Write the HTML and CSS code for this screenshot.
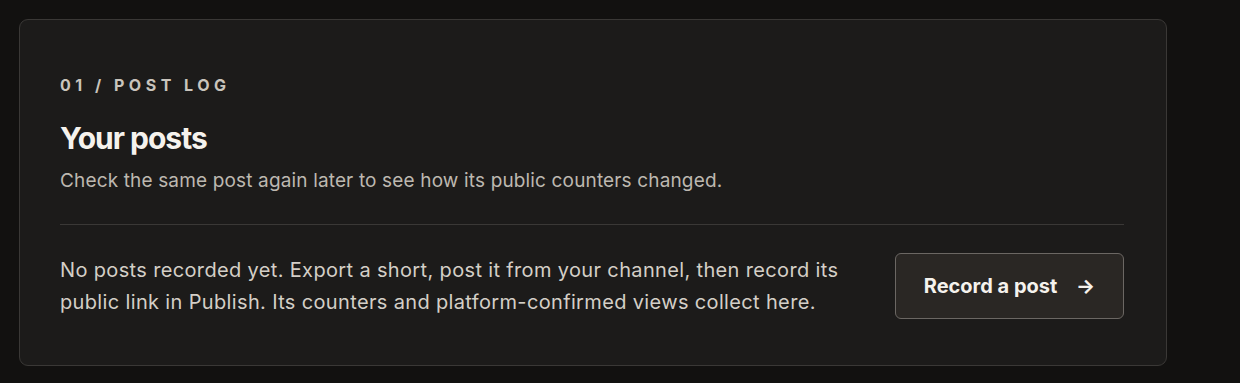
FILE: index.html
```html
<!DOCTYPE html>
<html lang="en">
<head>
    <meta charset="UTF-8">
    <meta name="viewport" content="width=device-width, initial-scale=1.0">
    <title>Post log</title>
    <link rel="stylesheet" href="styles.css">
</head>
<body>
    <div class="page">
        <section class="card">
            <div class="eyebrow">01 / POST LOG</div>
            <h2 class="title">Your posts</h2>
            <p class="subtitle">Check the same post again later to see how its public counters changed.</p>
            <hr class="divider">
            <div class="empty">
                <p class="empty-text">No posts recorded yet. Export a short, post it from your channel, then record its public link in Publish. Its counters and platform-confirmed views collect here.</p>
                <button class="record-button">Record a post <span class="arrow">&rarr;</span></button>
            </div>
        </section>
    </div>
</body>
</html>
```

FILE: styles.css
```css
body {
    margin: 0;
    background: #121110;
    font-family: Inter, "Noto Sans", sans-serif;
    color: #f2efea;
}

.page {
    padding: 19px 73px 18px 19px;
}

.card {
    background: #1c1b1a;
    border: 1px solid #3a3836;
    border-radius: 9px;
    padding: 54px 42px 46px 40px;
}

.eyebrow {
    font-size: 16px;
    font-weight: 700;
    letter-spacing: 4.5px;
    color: #c9c4bc;
    line-height: 22px;
}

.title {
    margin: 24px 0 0;
    font-size: 30px;
    font-weight: 700;
    letter-spacing: -1px;
    line-height: 36px;
    color: #f5f2ed;
}

.subtitle {
    margin: 11px 0 0;
    font-size: 19px;
    letter-spacing: 0.15px;
    line-height: 28px;
    color: #bdb8b0;
}

.divider {
    border: none;
    border-top: 1px solid #3a3836;
    margin: 29px 0 28px;
}

.empty {
    display: flex;
    justify-content: space-between;
    align-items: center;
    gap: 40px;
}

.empty-text {
    margin: 0;
    max-width: 805px;
    font-size: 20px;
    letter-spacing: 0.35px;
    line-height: 32px;
    color: #d4cfc7;
}

.record-button {
    flex-shrink: 0;
    width: 229px;
    height: 66px;
    background: #2a2724;
    border: 1px solid #6b6763;
    border-radius: 6px;
    color: #f5f2ed;
    font-family: inherit;
    font-size: 20px;
    font-weight: 700;
    cursor: pointer;
}

.arrow {
    margin-left: 14px;
}
```
